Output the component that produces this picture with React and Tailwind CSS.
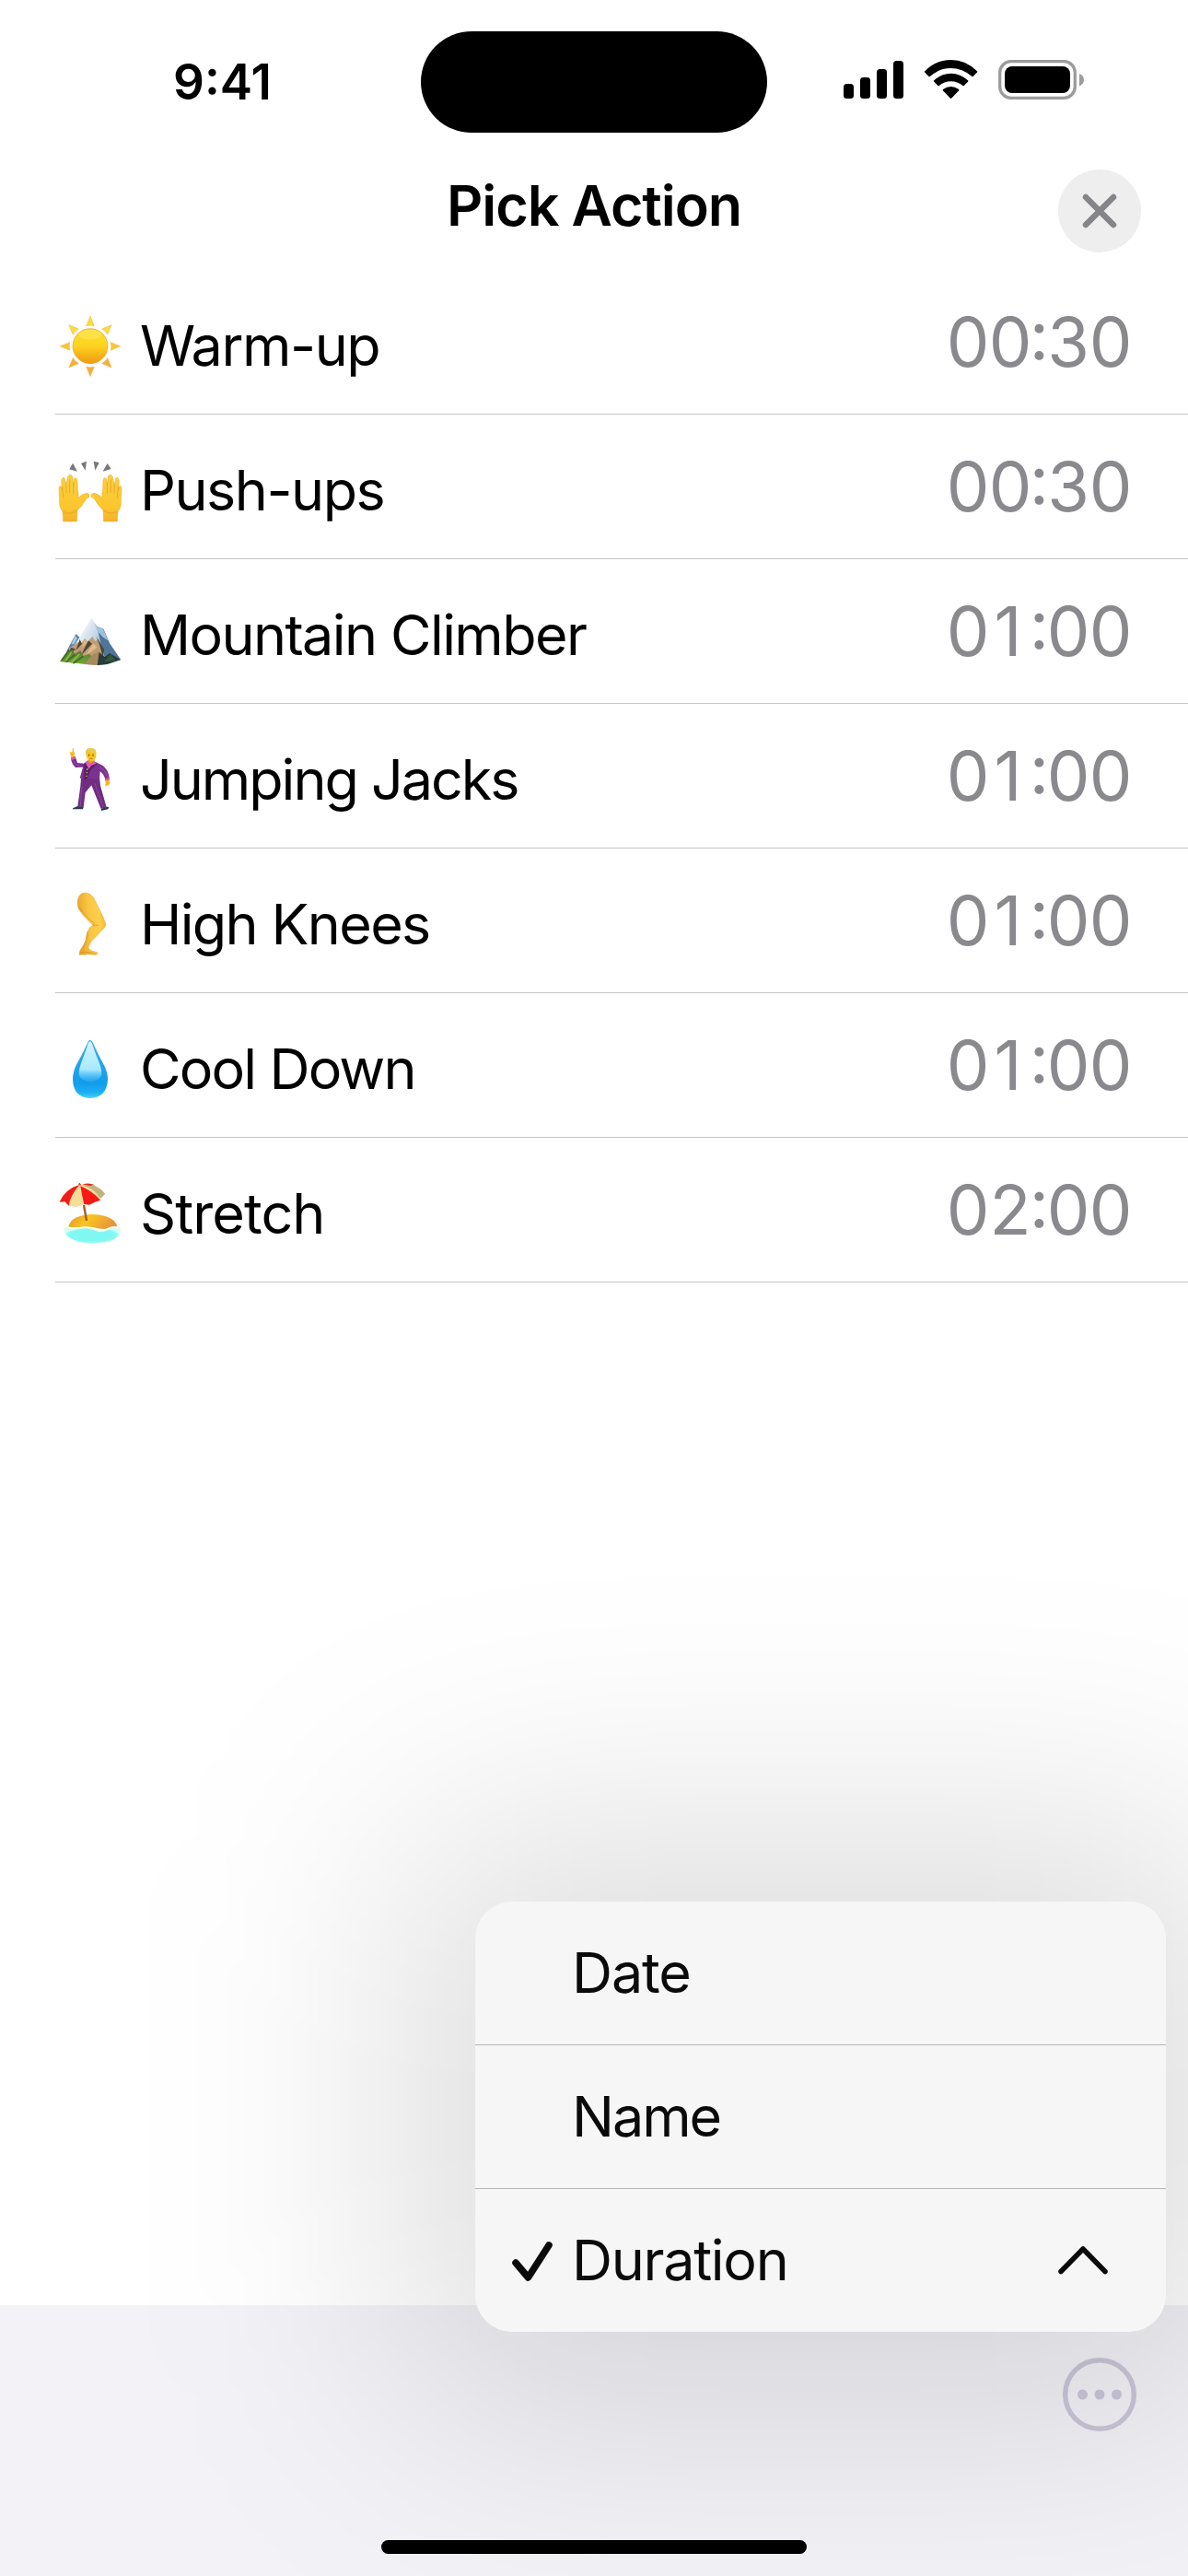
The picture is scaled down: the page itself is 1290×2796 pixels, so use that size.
import { useState } from "react";

function SunIcon() {
  const rays = [0, 45, 90, 135, 180, 225, 270, 315];
  return (
    <svg viewBox="60 78 240 240" className="size-20">
      <defs>
        <linearGradient id="sun" x1="0" y1="0" x2="0" y2="1">
          <stop offset="0" stopColor="#fbe02e" />
          <stop offset="0.5" stopColor="#fdd321" />
          <stop offset="1" stopColor="#f0990f" />
        </linearGradient>
      </defs>
      {rays.map((a) => (
        <path
          key={a}
          d="M174 99L187 131Q174 127 161 131Z"
          fill={a > 90 && a < 270 ? "#f5b038" : a === 90 || a === 270 ? "#f8c637" : "#fadd3a"}
          stroke="#eeb24a"
          strokeWidth="1.5"
          transform={`rotate(${a} 174 197.5)`}
        />
      ))}
      <circle cx="174" cy="197" r="57" fill="url(#sun)" stroke="#ec9a2a" strokeWidth="2" />
      <ellipse cx="174" cy="160" rx="36" ry="16" fill="#fff27a" opacity="0.35" />
    </svg>
  );
}

function Hand() {
  return (
    <g>
      <path
        d="M86 768L84 735Q72 722 74 700L72 659Q74 648 80 655L82 668L80 634Q84 621 91 628L94 650L96 652L101 622Q109 610 116 621L119 650L121 630Q128 621 132 633L133 662Q137 676 135 690Q150 678 162 676Q172 677 171 688Q160 692 156 702Q144 722 132 731L130 768Z"
        fill="url(#skin)"
        stroke="#eda52b"
        strokeWidth="1.5"
      />
      <path
        d="M83 656L86 690M95 640L96 675M107 632L107 674M119 642L119 676"
        stroke="#e09a22"
        strokeWidth="2"
        strokeLinecap="round"
        fill="none"
      />
      <path d="M84 735Q108 750 131 731" stroke="#e9a226" strokeWidth="5" fill="none" opacity="0.6" />
    </g>
  );
}

function HandsIcon() {
  return (
    <svg viewBox="60 549 240 240" className="size-20">
      <defs>
        <linearGradient id="skin" x1="0" y1="0" x2="0" y2="1">
          <stop offset="0" stopColor="#fbcf3c" />
          <stop offset="0.7" stopColor="#fcc62f" />
          <stop offset="1" stopColor="#f3b22a" />
        </linearGradient>
      </defs>
      <path
        d="M117 578L106 598L132 605ZM162 572L144 579L158 602ZM185 572L203 577L190 602ZM230 579L242 597L215 605Z"
        fill="#777"
      />
      <Hand />
      <g transform="translate(348 0) scale(-1 1)">
        <Hand />
      </g>
    </svg>
  );
}

function MountainIcon() {
  return (
    <svg viewBox="60 90 240 240" className="size-20">
      <defs>
        <linearGradient id="snow" x1="0" y1="0" x2="1" y2="0.4">
          <stop offset="0.4" stopColor="#edf3f5" />
          <stop offset="1" stopColor="#7ea6cb" />
        </linearGradient>
        <linearGradient id="grass" x1="0" y1="0" x2="0" y2="1">
          <stop offset="0" stopColor="#5f6b42" />
          <stop offset="1" stopColor="#6fae2f" />
        </linearGradient>
      </defs>
      <path d="M127 204L140 216L118 250L96 262Z" fill="#5b82a5" />
      <path d="M125 209L132 219L121 238L112 238Z" fill="#a9c8e0" />
      <path
        d="M75 294L108 250L124 240L178 153L196 180L217 188L237 235L273 288L228 303L197 306Z"
        fill="url(#snow)"
      />
      <path d="M196 180L217 188L237 235L273 288L228 303L216 262L206 226Z" fill="#4f7599" />
      <path d="M186 166L196 180L216 188L232 226L214 214L198 196Z" fill="#9ec1e0" />
      <path
        d="M106 252L126 238L136 230L143 237L157 218L165 230L181 213L190 228L198 222L212 258L230 302L197 306L75 294Z"
        fill="#bd9d74"
      />
      <path
        d="M140 222L127 258L147 236ZM168 226L144 274L180 236ZM194 212L204 240L215 278L220 256ZM112 248L96 277L126 254Z"
        fill="#4f4438"
      />
      <path d="M157 220L146 250L163 233ZM184 235L158 275L196 248Z" fill="#e1bb86" />
      <path d="M75 294L99 261L117 254L123 269L142 259L152 276L170 269L182 279L172 304Z" fill="url(#grass)" />
      <path d="M105 256L81 291M124 272L94 296M151 277L118 300" stroke="#3b6b25" strokeWidth="5" />
      <path d="M113 263L94 292M139 270L112 298" stroke="#8ac13c" strokeWidth="5" />
      <path d="M153 303L183 271L202 261L213 268L205 306Z" fill="#a78b5d" />
      <path d="M197 306L203 264L221 279L237 267L273 288L228 303Z" fill="#293b3c" />
      <path d="M219 295L240 270L256 291Z" fill="#315b37" />
    </svg>
  );
}

function DancerIcon() {
  return (
    <svg viewBox="60 561 240 240" className="size-20">
      <path
        d="M111 603L107 588L115 590L117 576Q121 574 120 588L124 592L121 604L113 608Z"
        fill="#f8b91e"
      />
      <path
        d="M144 674L142 700L133 766L152 769L158 721L178 697L209 774L227 769L207 698L204 670Z"
        fill="#702d81"
      />
      <path d="M147 701L142 764M188 690L216 767" stroke="#8e449f" strokeWidth="3" />
      <path
        d="M111 608L125 603L132 624L153 626L164 621L191 621L214 632Q233 645 237 677L223 680Q220 662 206 652L204 678L140 674L150 638L126 639Q113 627 111 608Z"
        fill="#7b318e"
      />
      <path d="M111 608L125 603L127 610L113 616ZM222 675L236 672L237 680L223 684Z" fill="#df55a8" />
      <path d="M154 626L166 616L178 631L184 617L195 628L175 648L164 675L154 680Z" fill="#572166" />
      <path d="M158 624L167 616L177 628L186 616L194 626L177 633L170 644Z" fill="#e75db2" />
      <path d="M164 643V648M163 654V658M162 665V669" stroke="#ddb545" strokeWidth="4" />
      <path d="M118 616Q124 632 140 633M204 638Q223 645 228 668" stroke="#9e4eb0" strokeWidth="3" fill="none" />
      <path d="M166 607L168 620L177 627L187 617L186 604Z" fill="#ed9d18" />
      <path d="M159 592Q159 576 176 576Q194 576 193 594Q195 617 177 619Q162 617 159 592Z" fill="#fac51c" />
      <path
        d="M159 598Q156 576 176 576Q195 576 193 598Q190 602 187 588Q176 592 166 587Q164 602 159 598Z"
        fill="#e7ca50"
      />
      <path d="M170 597V601M183 597V601" stroke="#644015" strokeWidth="3" strokeLinecap="round" />
      <path d="M172 611Q177 608 182 611" stroke="#a25316" strokeWidth="2" fill="none" />
      <path d="M224 682L236 680L238 691L232 698L222 698L224 690Z" fill="#f9b91b" />
      <path d="M133 765L152 768L150 775H116Q116 771 133 765ZM209 774L227 767L235 768L232 775L210 780Z" fill="#283d4e" />
    </svg>
  );
}

function LegIcon() {
  return (
    <svg viewBox="60 72 240 240" className="size-20">
      <defs>
        <linearGradient id="leg" x1="0" y1="0.2" x2="1" y2="0">
          <stop offset="0" stopColor="#e9a52a" />
          <stop offset="0.35" stopColor="#f8c643" />
          <stop offset="0.7" stopColor="#fbd04b" />
          <stop offset="1" stopColor="#f1b12d" />
        </linearGradient>
      </defs>
      <path
        d="M134 108Q138 88 157 87Q176 88 187 107L216 166Q220 178 224 188Q226 196 219 202L179 244Q168 258 168 267Q172 274 181 277L197 281Q200 287 193 289L163 287L158 289L139 289Q136 283 143 271Q154 258 160 241Q160 218 172 201L183 193Q161 173 144 151Q128 132 134 108Z"
        fill="url(#leg)"
        stroke="#e7a12d"
        strokeWidth="1.5"
      />
      <path d="M137 132Q155 163 187 186L183 194Q190 191 200 193" stroke="#d99624" strokeWidth="3" fill="none" opacity="0.8" />
      <path d="M166 214Q164 238 151 265" stroke="#d38c1e" strokeWidth="4" fill="none" opacity="0.55" />
      <path d="M142 281L166 281L191 286" stroke="#dc951f" strokeWidth="4" fill="none" opacity="0.7" />
    </svg>
  );
}

function DropIcon() {
  return (
    <svg viewBox="60 543 240 240" className="size-20">
      <defs>
        <linearGradient id="drop" x1="0" y1="0" x2="0" y2="1">
          <stop offset="0" stopColor="#35aaf0" />
          <stop offset="0.75" stopColor="#129deb" />
          <stop offset="0.9" stopColor="#1caff5" />
          <stop offset="1" stopColor="#4bd3fa" />
        </linearGradient>
        <linearGradient id="dropShine" x1="0" y1="0" x2="0" y2="1">
          <stop offset="0" stopColor="#d5f4ff" />
          <stop offset="0.7" stopColor="#a9e9ff" />
          <stop offset="1" stopColor="#62cafa" stopOpacity="0.2" />
        </linearGradient>
      </defs>
      <path
        d="M173 566Q179 567 184 579Q199 613 217 645Q231 669 231 696Q228 753 174 756Q119 753 117 696Q117 669 130 645Q148 613 164 579Q168 567 173 566Z"
        fill="url(#drop)"
      />
      <path
        d="M173 571Q177 571 182 584Q191 610 204 642Q215 675 209 685Q198 701 174 701Q150 701 139 685Q133 675 144 642Q156 610 165 584Q169 571 173 571Z"
        fill="url(#dropShine)"
      />
    </svg>
  );
}

function BeachIcon() {
  return (
    <svg viewBox="60 84 240 240" className="size-20">
      <defs>
        <radialGradient id="water">
          <stop offset="0.65" stopColor="#80f7f0" />
          <stop offset="0.85" stopColor="#82fbf7" />
          <stop offset="1" stopColor="#a9fcf7" stopOpacity="0.5" />
        </radialGradient>
        <linearGradient id="sand" x1="0" y1="0" x2="1" y2="0.25">
          <stop offset="0" stopColor="#dc9233" />
          <stop offset="0.45" stopColor="#fac51e" />
          <stop offset="1" stopColor="#e8963b" />
        </linearGradient>
      </defs>
      <path d="M88 247Q84 270 116 286Q150 302 190 298Q244 296 265 275Q277 261 271 246Z" fill="url(#water)" />
      <path
        d="M94 249Q100 235 119 236L255 237Q275 248 265 259Q244 242 227 257Q205 268 185 255Q154 245 126 254Q106 262 94 249Z"
        fill="#e4f8d9"
      />
      <path d="M103 243Q109 218 143 209Q181 198 223 210Q258 221 262 245Q242 242 230 252Q212 252 191 249Q158 242 126 247Q110 249 103 243Z" fill="url(#sand)" />
      <path d="M99 247Q126 251 155 246Q178 247 191 251Q219 261 236 249Q251 242 264 249" stroke="#fff" strokeWidth="5" fill="none" />
      <path d="M153 174L162 225" stroke="#a45c24" strokeWidth="7" />
      <path d="M150 106Q165 100 185 107L222 137L211 150L200 156Z" fill="#b9ad76" />
      <path d="M74 164Q89 121 139 108L145 107Q166 101 181 108Q212 119 222 137L207 151L207 158L186 166L171 173L154 171L130 180L104 176L91 166Z" fill="#f4dc99" />
      <path d="M139 108Q92 122 74 164L91 162L104 176Q108 143 139 108Z" fill="#f31b18" />
      <path d="M142 112Q147 143 154 171L171 173L187 165L207 158Q180 128 142 112Z" fill="#f61915" />
      <path d="M145 110Q184 115 207 151L222 137Q204 116 179 109Z" fill="#c1b37b" />
      <path d="M149 107Q165 102 185 107L176 111Z" fill="#d62a23" />
      <path d="M137 108L139 104L143 109" stroke="#ef332a" strokeWidth="4" fill="none" />
    </svg>
  );
}

const actions = [
  { name: "Warm-up", time: "00:30", Icon: SunIcon, tracking: "tracking-[-0.023em]" },
  { name: "Push-ups", time: "00:30", Icon: HandsIcon, tracking: "tracking-[-0.024em]" },
  { name: "Mountain Climber", time: "01:00", Icon: MountainIcon, tracking: "tracking-[-0.026em]" },
  { name: "Jumping Jacks", time: "01:00", Icon: DancerIcon, tracking: "tracking-[-0.033em]" },
  { name: "High Knees", time: "01:00", Icon: LegIcon, tracking: "tracking-[-0.027em]" },
  { name: "Cool Down", time: "01:00", Icon: DropIcon, tracking: "tracking-[-0.03em]" },
  { name: "Stretch", time: "02:00", Icon: BeachIcon, tracking: "tracking-[-0.015em]" },
];

const sortOptions = [
  { name: "Date", tracking: "tracking-[-0.018em]" },
  { name: "Name", tracking: "tracking-[-0.033em]" },
  { name: "Duration", tracking: "tracking-[-0.021em]" },
];

function StatusBar() {
  return (
    <div className="flex h-[150px] shrink-0 items-start">
      <div className="w-[457px] pt-[61px] pl-[188px] text-[53px] leading-[56px] font-semibold">
        9:41
      </div>
      <div className="mt-[34px] h-[110px] w-[376px] rounded-full bg-black" />
      <svg viewBox="0 0 270 50" className="mt-[62px] ml-[77px] h-[50px] w-[270px]">
        {/* signal */}
        <rect x="6" y="29" width="11" height="16" rx="3.5" />
        <rect x="24" y="22" width="11" height="23" rx="3.5" />
        <rect x="42" y="13" width="11" height="32" rx="3.5" />
        <rect x="60" y="4" width="11" height="41" rx="3.5" />
        {/* wifi */}
        <path d="M94 15.5Q106 3 122.5 3Q139 3 151.3 15.5Q151.3 16 151 16.5L146.5 21Q146 21.3 145.5 21Q135 12 122.5 12Q110 12 99.7 21Q99 21.3 98.5 21L94.2 16.5Q93.7 16 94 15.5Z" />
        <path d="M104 25.5Q112 17.7 122.5 17.7Q133 17.7 141.3 25.5Q141.5 26 141.2 26.5L136.7 31Q136 31.3 135.5 31Q130 26.2 122.5 26.2Q115 26.2 109.7 31Q109 31.3 108.5 31L104 26.5Q103.7 26 104 25.5Z" />
        <path d="M114 35Q118 32 122.5 32Q127 32 131.2 35Q131.6 35.7 131.2 36.3L123.3 44.5Q122.5 45.3 121.7 44.5L113.9 36.3Q113.5 35.6 114 35Z" />
        {/* battery */}
        <rect x="175.7" y="4.7" width="81.6" height="39.6" rx="12" fill="none" stroke="#9c9c9c" strokeWidth="3.3" />
        <rect x="181" y="10" width="71" height="29" rx="8" />
        <path d="M262 18Q267 20 267 24.5Q267 29 262 31.5Z" fill="#9c9c9c" />
      </svg>
    </div>
  );
}

function Header() {
  return (
    <div className="grid h-[143px] shrink-0 grid-cols-[1fr_auto_1fr] items-start">
      <h1 className="col-start-2 pt-[37px] text-[61px] leading-[72px] font-semibold tracking-[-0.018em]">
        Pick Action
      </h1>
      <button
        type="button"
        aria-label="Close"
        className="mt-[34px] mr-[51px] flex size-[90px] items-center justify-center justify-self-end rounded-full bg-[#eeeeef]"
      >
        <svg viewBox="0 0 38 38" className="size-[38px]">
          <path d="M4 4L34 34M34 4L4 34" stroke="#858489" strokeWidth="6.5" strokeLinecap="round" />
        </svg>
      </button>
    </div>
  );
}

const charWidths = { ":": "w-[17px]", 1: "w-[46px] pr-[5px]" };

// Fixed-width digits, so the times line up without the slab "1"
function Time({ value }) {
  return (
    <span className="mt-[34px] flex text-[74px] leading-[88px] text-[#8a898e] [font-feature-settings:'case']">
      {value.split("").map((char, i) => (
        <span key={i} className={`flex justify-center ${charWidths[char] || "w-[46px]"}`}>
          {char}
        </span>
      ))}
    </span>
  );
}

function ActionRow({ name, time, Icon, tracking }) {
  return (
    <li className="flex h-[157px] items-start border-b border-[#c6c6c8] pr-[61px]">
      <div className="mt-[43px]">
        <Icon />
      </div>
      <span className={`mt-[46px] ml-[12px] flex-1 text-[61px] leading-[72px] ${tracking}`}>
        {name}
      </span>
      <Time value={time} />
    </li>
  );
}

export default function App() {
  const [sortBy, setSortBy] = useState("Duration");

  return (
    <div className="relative flex h-[2796px] w-[1290px] flex-col overflow-hidden bg-white font-['Inter',sans-serif] text-black">
      <StatusBar />
      <Header />

      <ul className="flex-1 pl-[60px]">
        {actions.map((action) => (
          <ActionRow key={action.name} {...action} />
        ))}
      </ul>

      {/* Bottom toolbar */}
      <div className="flex h-[294px] shrink-0 flex-col items-center justify-between bg-[#f3f2f7] pb-[24px]">
        <button type="button" aria-label="More" className="mt-[57px] mr-[56px] self-end">
          <svg viewBox="0 0 80 80" className="size-20">
            <circle cx="40" cy="40" r="37.3" fill="none" stroke="#cbc6d9" strokeWidth="5.4" />
            <circle cx="21.5" cy="40" r="5.5" fill="#cbc6d9" />
            <circle cx="40" cy="40" r="5.5" fill="#cbc6d9" />
            <circle cx="58.5" cy="40" r="5.5" fill="#cbc6d9" />
          </svg>
        </button>
        <div className="relative z-10 h-[15px] w-[462px] rounded-full bg-black" />
      </div>

      {/* Soft shadow that spreads around the menu */}
      <div className="absolute top-[1979px] left-[431px] h-[637px] w-[920px] rounded-[100px] bg-black/13 blur-[136px]" />

      {/* Sort menu */}
      <div className="absolute top-[2064px] left-[516px] w-[750px] divide-y divide-[#b4b5b5] rounded-[40px] bg-[#f6f6f6] text-[#0a0a0a]">
        {sortOptions.map(({ name, tracking }) => (
          <button
            key={name}
            type="button"
            onClick={() => setSortBy(name)}
            className="flex h-[156px] w-full items-center pr-[62px] pl-[38px] text-left last:h-[155px]"
          >
            <span className="w-[67px]">
              {sortBy === name && (
                <svg viewBox="0 0 48 46" className="mt-[2px] h-[46px] w-[48px]">
                  <path
                    d="M6 24L19.5 40L42 5"
                    fill="none"
                    stroke="currentColor"
                    strokeWidth="7.5"
                    strokeLinecap="round"
                    strokeLinejoin="round"
                  />
                </svg>
              )}
            </span>
            <span className={`flex-1 pb-[2px] text-[61px] leading-[72px] ${tracking}`}>{name}</span>
            {name === "Duration" && (
              <svg viewBox="0 0 56 34" className="-mt-[2px] h-[34px] w-[56px]">
                <path
                  d="M4 29.5L28 5L52 29.5"
                  fill="none"
                  stroke="currentColor"
                  strokeWidth="5.5"
                  strokeLinecap="round"
                  strokeLinejoin="round"
                />
              </svg>
            )}
          </button>
        ))}
      </div>
    </div>
  );
}
